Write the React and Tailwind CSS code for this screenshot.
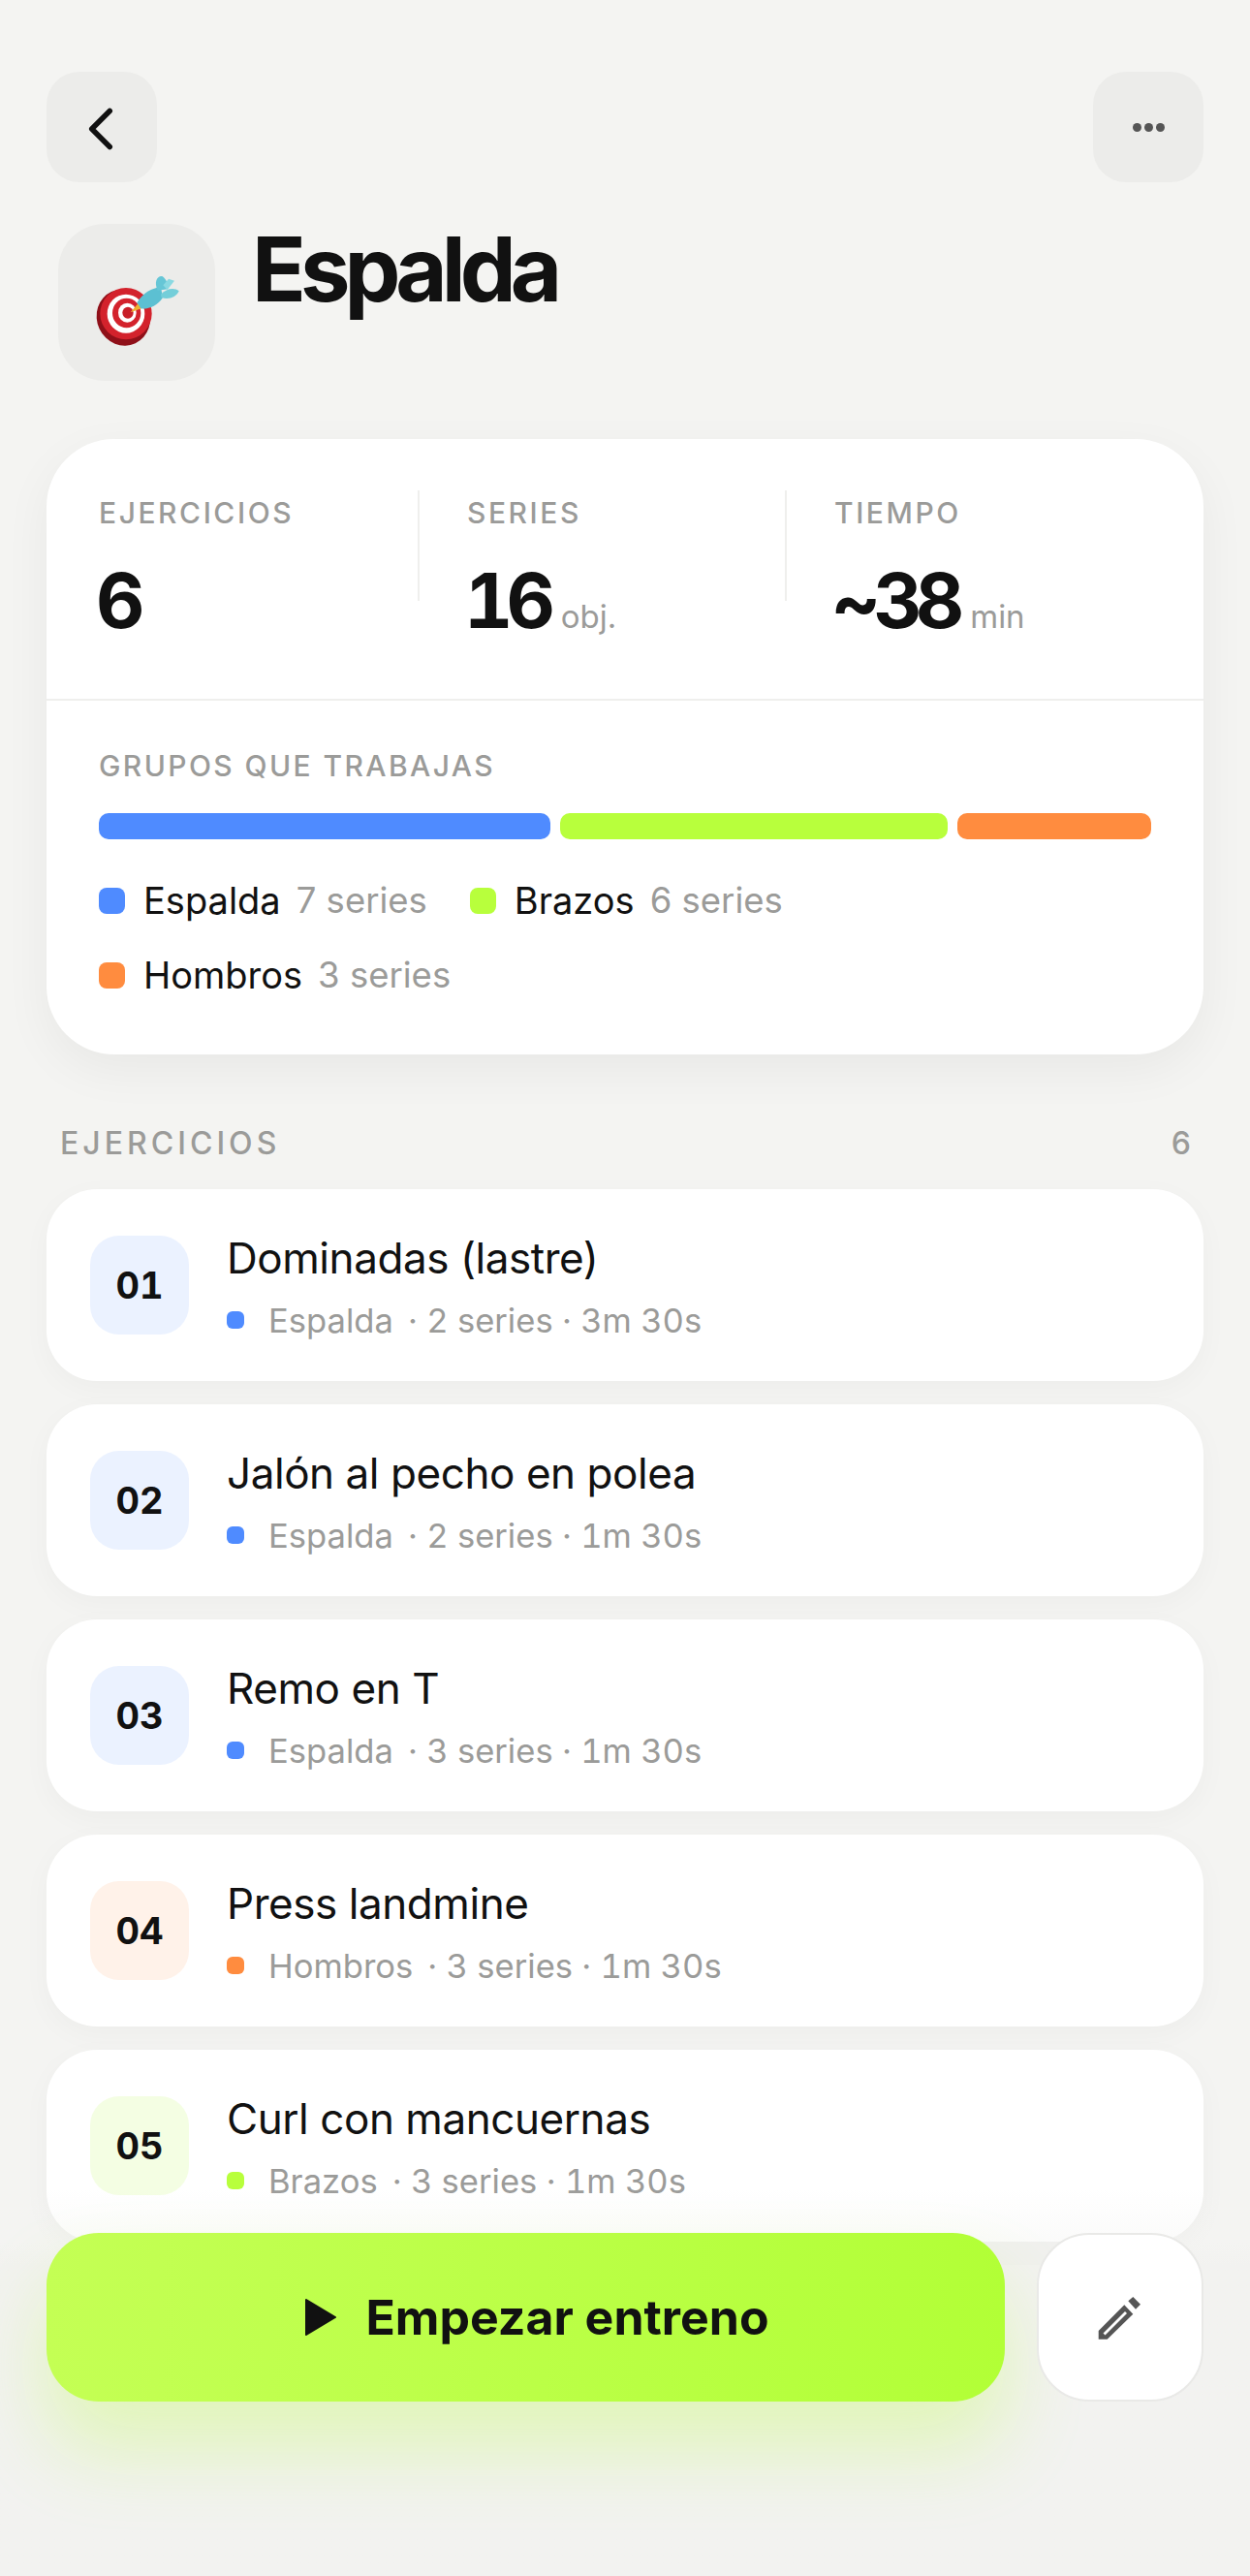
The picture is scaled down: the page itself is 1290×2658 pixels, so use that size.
import React from "react";
import { ChevronLeft } from "lucide-react";

const ejercicios = [
  { n: "01", nombre: "Dominadas (lastre)", grupo: "Espalda", meta: "· 2 series · 3m 30s", dot: "bg-[#4f8bff]", box: "bg-[#ebf2ff]" },
  { n: "02", nombre: "Jalón al pecho en polea", grupo: "Espalda", meta: "· 2 series · 1m 30s", dot: "bg-[#4f8bff]", box: "bg-[#ebf2ff]" },
  { n: "03", nombre: "Remo en T", grupo: "Espalda", meta: "· 3 series · 1m 30s", dot: "bg-[#4f8bff]", box: "bg-[#ebf2ff]" },
  { n: "04", nombre: "Press landmine", grupo: "Hombros", meta: "· 3 series · 1m 30s", dot: "bg-[#ff8c3f]", box: "bg-[#fff2e9]" },
  { n: "05", nombre: "Curl con mancuernas", grupo: "Brazos", meta: "· 3 series · 1m 30s", dot: "bg-[#b8ff3c]", box: "bg-[#f4fee3]" },
];

const DartIcon = () => (
  <svg viewBox="60 60 486 486" className="w-[162px] h-[162px]">
    <ellipse cx="262" cy="350" rx="82" ry="88" transform="rotate(-25 262 350)" fill="#8f1019" />
    <ellipse cx="270" cy="338" rx="80" ry="80" fill="#d3222c" />
    <ellipse cx="270" cy="338" rx="58" ry="60" fill="#fff" />
    <ellipse cx="272" cy="336" rx="44" ry="46" fill="#d3222c" />
    <ellipse cx="274" cy="335" rx="28" ry="30" fill="#fff" />
    <ellipse cx="276" cy="335" rx="17" ry="18" fill="#c81e28" />
    <path d="M284 334 L308 306 L322 320 Z" fill="#f0b12e" />
    <path d="M304 304 C322 274 350 258 378 256 L384 288 C368 314 336 326 316 322 Z" fill="#5cc0d2" />
    <path d="M368 266 C356 240 366 220 382 222 C394 230 402 246 400 262 Z" fill="#66c6d6" />
    <path d="M378 278 C395 260 420 256 434 268 C426 288 400 296 380 288 Z" fill="#74ced9" />
    <path d="M385 250 L402 230 L420 236 L398 264 Z" fill="#8ad9e2" />
  </svg>
);

const Stat = ({ label, value, unit, first }) => (
  <div className={first ? "h-[114px]" : "h-[114px] border-l-2 border-[#efefed] pl-[49px]"}>
    <div className="text-[30px] leading-[34px] mt-[6px] font-medium tracking-[0.085em] text-[#9b9b99]">{label}</div>
    <div className="flex items-baseline mt-[33px] -ml-[3px]">
      <span className="text-[78px] leading-[82px] font-bold tabular-nums tracking-[-0.09em] text-[#111]">{value}</span>
      {unit && <span className="text-[33px] leading-none ml-[13px] text-[#9b9b99]">{unit}</span>}
    </div>
  </div>
);

const Legend = ({ dot, name, series }) => (
  <div className="flex items-center">
    <span className={`w-[27px] h-[27px] rounded-[8px] ${dot}`} />
    <span className="ml-[19px] text-[38px] leading-[46px] font-normal text-[#111]">{name}</span>
    <span className="ml-[16px] text-[36.5px] leading-[46px] text-[#9b9b99]">{series}</span>
  </div>
);

const Row = ({ item }) => (
  <div className="flex items-start h-[198px] shrink-0 rounded-[52px] bg-white px-[45px] pt-[48px] shadow-[0_8px_30px_rgba(0,0,0,0.03)]">
    <div className={`w-[102px] h-[102px] rounded-[30px] flex items-center justify-center text-[38px] font-bold tabular-nums text-[#111] ${item.box}`}>
      {item.n}
    </div>
    <div className="ml-[39px] -mt-[5px]">
      <div className="text-[44px] leading-[56px] font-[430] tracking-[-0.01em] text-[#111]">{item.nombre}</div>
      <div className="flex items-center mt-[14px] text-[34.6px] leading-[44px] tabular-nums text-[#9b9b99]">
        <span className={`w-[18px] h-[18px] rounded-[6px] ${item.dot}`} />
        <span className="ml-[25px]">{item.grupo}</span>
        <span className="ml-[15px]">{item.meta}</span>
      </div>
    </div>
  </div>
);

export default function App() {
  return (
    <div className="relative h-[2658px] overflow-hidden bg-[#f4f4f2] font-['Inter',sans-serif]">
      <div className="px-[48px] pt-[74px]">
        <div className="flex justify-between">
          <button className="w-[114px] h-[114px] rounded-[34px] bg-[#ececea] flex items-center justify-center">
            <ChevronLeft size={74} strokeWidth={1.8} className="text-[#111] -ml-[2px] mt-[3px]" />
          </button>
          <button className="w-[114px] h-[114px] rounded-[34px] bg-[#ececea] flex items-center justify-center gap-[3px]">
            <span className="w-[9px] h-[9px] rounded-full bg-[#555]" />
            <span className="w-[9px] h-[9px] rounded-full bg-[#555]" />
            <span className="w-[9px] h-[9px] rounded-full bg-[#555]" />
          </button>
        </div>

        <div className="flex mt-[43px] pl-[12px]">
          <div className="w-[162px] h-[162px] rounded-[48px] bg-[#ececea] flex items-center justify-center">
            <DartIcon />
          </div>
          <h1 className="ml-[38px] text-[92px] leading-[92px] mt-[1px] font-bold tracking-[-0.065em] text-[#111]">Espalda</h1>
        </div>

        <div className="mt-[60px] rounded-[70px] bg-white h-[635px] shadow-[0_16px_50px_rgba(0,0,0,0.05)]">
          <div className="h-[270px] px-[54px] pt-[53px] border-b-2 border-[#efefed] grid grid-cols-[329px_379px_1fr]">
            <Stat first label="EJERCICIOS" value="6" />
            <Stat label="SERIES" value="16" unit="obj." />
            <Stat label="TIEMPO" value="~38" unit="min" />
          </div>
          <div className="px-[54px] pt-[50px]">
            <div className="text-[30px] leading-[34px] font-medium tracking-[0.08em] text-[#9b9b99]">GRUPOS QUE TRABAJAS</div>
            <div className="flex gap-[10px] mt-[32px] h-[27px]">
              <div className="w-[466px] rounded-[10px] bg-[#4f8bff]" />
              <div className="w-[400px] rounded-[10px] bg-[#b8ff3c]" />
              <div className="flex-1 rounded-[10px] bg-[#ff8c3f]" />
            </div>
            <div className="flex flex-col gap-[31px] mt-[40px]">
              <div className="flex gap-x-[44px]">
                <Legend dot="bg-[#4f8bff]" name="Espalda" series="7 series" />
                <Legend dot="bg-[#b8ff3c]" name="Brazos" series="6 series" />
              </div>
              <Legend dot="bg-[#ff8c3f]" name="Hombros" series="3 series" />
            </div>
          </div>
        </div>

        <div className="flex justify-between items-center mt-[74px] px-[14px] text-[32px] leading-[36px] font-medium tracking-[0.125em] text-[#9b9b99]">
          <span>EJERCICIOS</span>
          <span className="-mr-[5px]">6</span>
        </div>

        <div className="flex flex-col gap-[24px] mt-[29px]">
          {ejercicios.map((item) => (
            <Row key={item.n} item={item} />
          ))}
        </div>
      </div>

      {/* fade over the list, then the sticky actions */}
      <div className="absolute inset-x-0 top-[2258px] bottom-0 bg-gradient-to-b from-[#f4f4f200] via-[#f4f4f266] via-[14%] to-[#f2f2f0] to-[20%]" />
      <div className="absolute left-[90px] w-[1128px] top-[2313px] h-[24px] bg-[#f0f0ee]" />
      <div className="absolute left-[48px] right-[48px] top-[2304px] flex gap-[33px]">
        <button className="flex-1 h-[174px] pl-[24px] rounded-[54px] bg-gradient-to-r from-[#c4ff54] to-[#b2ff36] flex items-center justify-center gap-[30px] shadow-[0_50px_80px_rgba(184,255,60,0.3)]">
          <svg viewBox="0 0 32 40" className="w-[32px] h-[40px]"><path d="M1 2 L31 20 L1 38 Z" fill="#111" stroke="#111" strokeWidth="2" strokeLinejoin="round" /></svg>
          <span className="text-[50px] leading-none font-bold text-[#111]">Empezar entreno</span>
        </button>
        <button className="w-[172px] h-[174px] rounded-[54px] bg-white border-2 border-[#e9e9e7] flex items-center justify-center">
          <svg viewBox="0 0 130 100" className="w-[130px] h-[100px]" fill="#555">
            <path fillRule="evenodd" d="M42.7 72.7 V64 L69.3 37.3 L78.3 46.7 L51.7 72.7 Z M47.5 66.5 L49.5 68.5 L72 46 L70 44 Z" />
            <path d="M73.3 33.3 L78.3 29 L86 36.7 L81 41.7 Z" />
          </svg>
        </button>
      </div>
    </div>
  );
}
